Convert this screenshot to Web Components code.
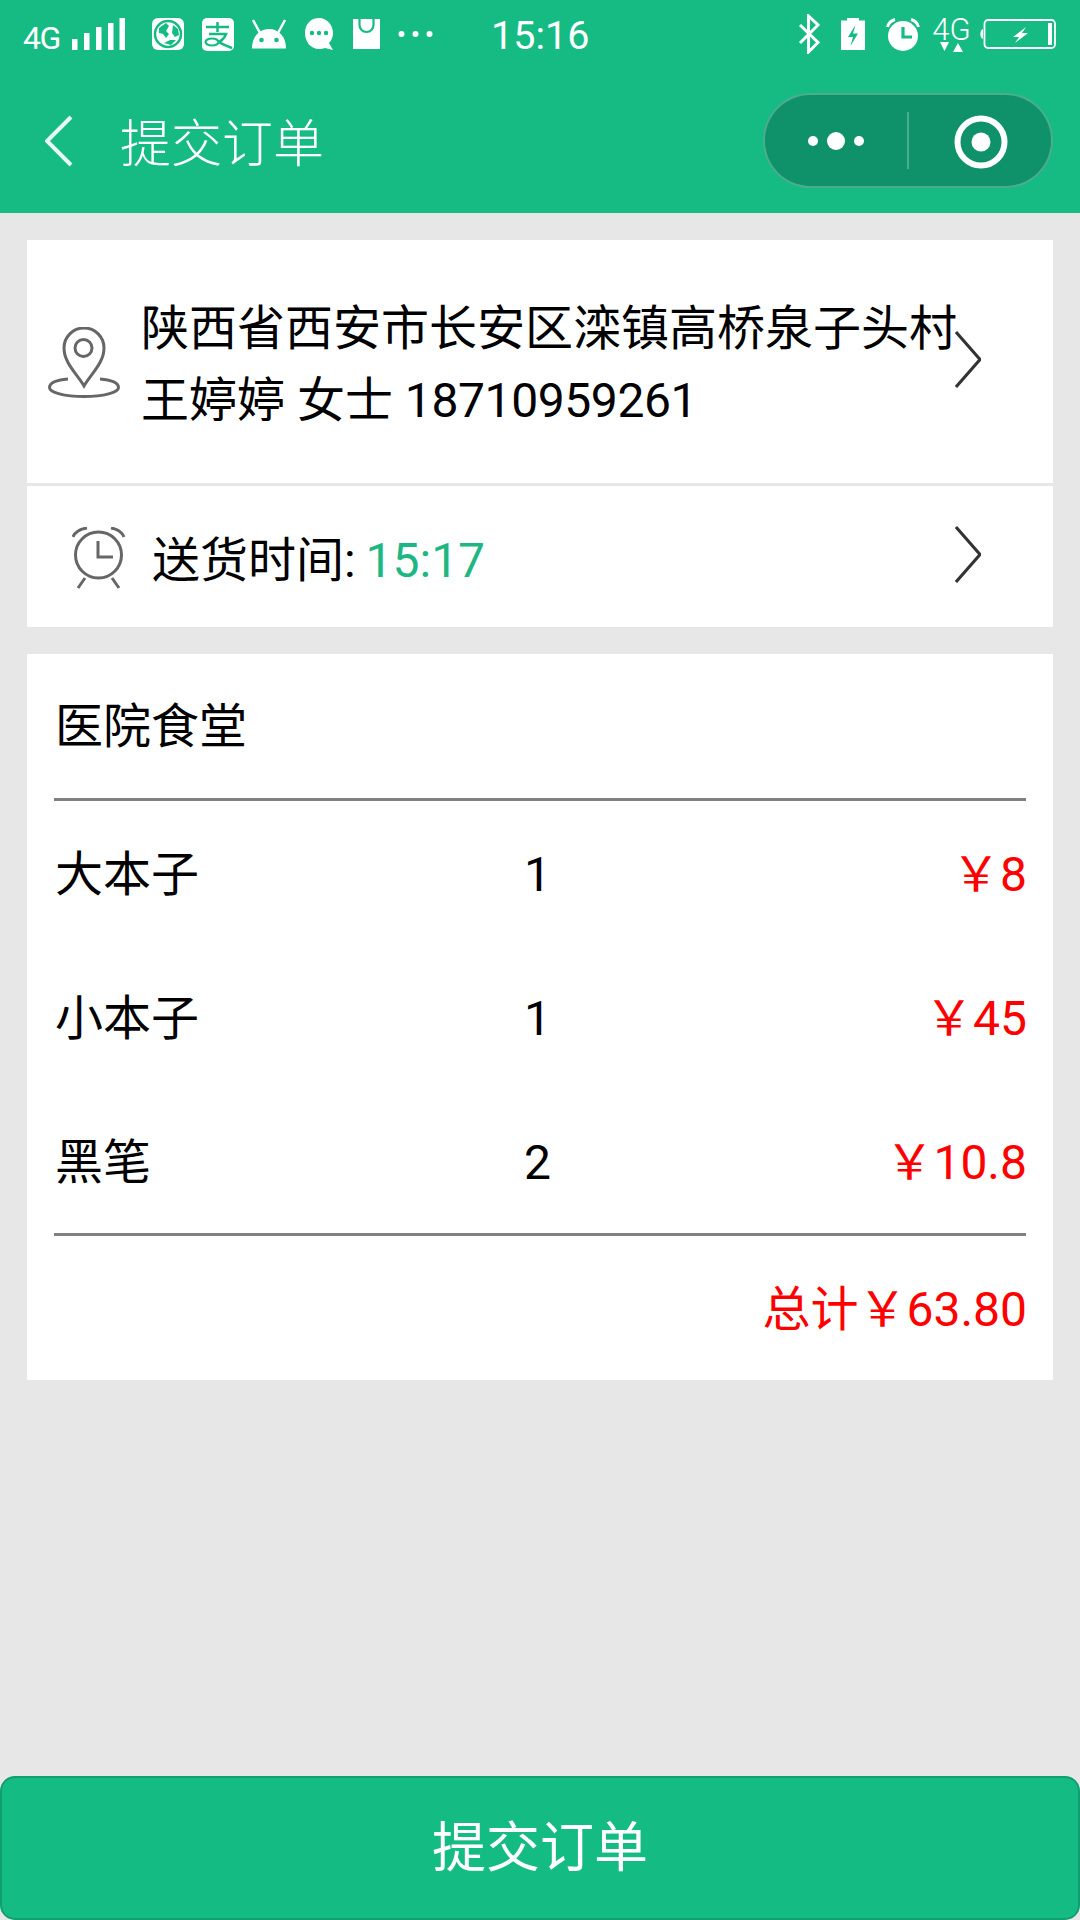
<!DOCTYPE html>
<html lang="zh">
<head>
<meta charset="utf-8">
<title>提交订单</title>
<style>
    html, body {
        margin: 0;
        height: 1920px;
    }
    body {
        display: flex;
        flex-direction: column;
        background: #e7e7e7;
        font-family: Roboto, "Noto Sans CJK SC", sans-serif;
        color: #000;
        overflow: hidden;
    }
    .orders {
        flex: 1;
        padding: 27px 27px 0;
    }
    .accent { color: #1db784; margin-left: -2px; }
    .phone { letter-spacing: -.4px; }
</style>
</head>
<body>
<app-statusbar></app-statusbar>
<app-navbar>提交订单</app-navbar>
<div class="orders">
    <info-row size="address">
        <svg slot="icon" width="72" height="71" viewBox="0 0 72 71" fill="none" stroke="#666" stroke-width="3">
            <path d="M36 59C29 47 16 36 16 21a20 20 0 0 1 40 0C56 36 43 47 36 59Z"/>
            <circle cx="35.500" cy="21" r="8.500"/>
            <path d="M20 52C8 53 1.500 56 1.500 60.500c0 5 15 9 34.500 9s34.500-4 34.500-9c0-4.500-7-7.500-18.500-8.500"/>
        </svg>
        <div>陕西省西安市长安区滦镇高桥泉子头村</div>
        <div>王婷婷 女士 <span class="phone">18710959261</span></div>
    </info-row>
    <info-row size="time">
        <svg slot="icon" width="54" height="63" viewBox="0 0 54 63" fill="none" stroke="#666" stroke-width="3">
            <circle cx="26.500" cy="28" r="23"/>
            <path d="M26 14v16h15"/>
            <path d="M1 10C3 5 8 2 15 1M52 10C50 5 45 2 39 1M13 51l-7 10M40 51l7 10"/>
        </svg>
        <div>送货时间: <span class="accent">15:17</span></div>
    </info-row>
    <order-card shop="医院食堂" total="总计￥63.80">
        <order-row name="大本子" qty="1" price="￥8"></order-row>
        <order-row name="小本子" qty="1" price="￥45"></order-row>
        <order-row name="黑笔" qty="2" price="￥10.8"></order-row>
    </order-card>
</div>
<submit-bar>提交订单</submit-bar>

<script>
class AppStatusbar extends HTMLElement {
    constructor() {
        super();
        this.attachShadow({ mode: 'open' });
        this.shadowRoot.innerHTML = `
            <style>
                :host {
                    display: flex;
                    align-items: center;
                    height: 68px;
                    padding: 0 24px 4px 24px;
                    background: #15bb83;
                    color: #fff;
                    font-family: Roboto, sans-serif;
                }
                svg { display: block; flex: none; }
                .net { font-size: 32px; letter-spacing: -1.500px; width: 36px; margin-top: 8px; margin-left: -1px; margin-right: 1px; }
                .time { font-size: 39.500px; width: 96px; margin-left: 58px; margin-top: 3px; }
                .spacer { flex: 1; }
                .net2 { display: flex; flex-direction: column; align-items: center; width: 37px; margin-left: 13px; }
                .net2 span { font-size: 31px; line-height: 25px; font-weight: 300; }
            </style>
            <span class="net">4G</span>
            <svg style="margin-left:12px" width="53" height="32" viewBox="0 0 53 32" fill="#fff">
                <rect x="0" y="21" width="5.500" height="11"/><rect x="12" y="15" width="5.500" height="17"/>
                <rect x="24" y="9" width="5.500" height="23"/><rect x="36" y="5" width="5.500" height="27"/>
                <rect x="47.500" y="0" width="5.500" height="32"/>
            </svg>
            <svg style="margin-left:27px" width="32" height="32" viewBox="0 0 32 32">
                <rect width="32" height="32" rx="6" fill="#fff"/>
                <circle cx="16" cy="16" r="13" fill="#fff" stroke="#15bb83" stroke-width="2.500"/>
                <path d="M7 10l7-5 3 3-3 5 3 3-3 4-3-4-4-1ZM21 7l5 4 1 6-4 2-3-4ZM12 25l6-3 6 0-5 5Z" fill="#15bb83"/>
            </svg>
            <svg style="margin-left:18px" width="32" height="33" viewBox="0 0 32 33">
                <rect width="32" height="33" rx="5" fill="#fff"/>
                <path d="M4 9h23M15.500 4v10M7 16h17c-2 6-8 9-13 10M12 21c4 3 10 6 18 9" fill="none" stroke="#15bb83" stroke-width="2.500"/>
                <ellipse cx="10" cy="24" rx="6.500" ry="3.500" fill="#fff" stroke="#15bb83" stroke-width="2.200"/>
            </svg>
            <svg style="margin-left:18px" width="34" height="30" viewBox="0 0 34 30">
                <path d="M0 29.500C0 18 7 10 17 10s17 8 17 19.500Z" fill="#fff"/>
                <path d="M8 14L1 1M26 14l7-13" stroke="#fff" stroke-width="2.500"/>
                <circle cx="9.500" cy="21" r="2.300" fill="#15bb83"/><circle cx="24.500" cy="21" r="2.300" fill="#15bb83"/>
            </svg>
            <svg style="margin-left:19px" width="30" height="33" viewBox="0 0 30 33">
                <path d="M14 0c8 0 14 7 14 15 0 4-1.500 7.500-4 10l4 7-8-2c-2 .8-4 1-6 1C6 31 0 24 0 15S6 0 14 0Z" fill="#fff"/>
                <circle cx="7" cy="15" r="2.200" fill="#15bb83"/><circle cx="14" cy="15" r="2.200" fill="#15bb83"/><circle cx="21" cy="15" r="2.200" fill="#15bb83"/>
            </svg>
            <svg style="margin-left:18px" width="27" height="30" viewBox="0 0 27 30">
                <rect width="27" height="30" fill="#fff"/>
                <path d="M6.500 0v6c0 4 3 7 7 7s7-3 7-7V0" fill="none" stroke="#15bb83" stroke-width="2.200"/>
            </svg>
            <svg style="margin-left:18px" width="35" height="8" viewBox="0 0 35 8" fill="#fff">
                <circle cx="3.500" cy="4" r="3"/><circle cx="17.500" cy="4" r="3"/><circle cx="31.500" cy="4" r="3"/>
            </svg>
            <span class="time">15:16</span>
            <span class="spacer"></span>
            <svg width="22" height="40" viewBox="0 0 22 40" fill="none" stroke="#fff" stroke-width="3">
                <path d="M2 11L20 28.500 10.500 38V2L20 11 2 29"/>
            </svg>
            <svg style="margin-left:21px" width="24" height="32" viewBox="0 0 24 32">
                <path d="M0 2.500h6V0h12v2.500h6V32H0Z" fill="#fff"/>
                <path d="M14.500 7L7 19h5l-2.500 9L17 15.500h-5Z" fill="#15bb83"/>
            </svg>
            <svg style="margin-left:21px" width="34" height="33" viewBox="0 0 34 33">
                <circle cx="17" cy="18" r="15" fill="#fff"/>
                <path d="M17 9v10h9" fill="none" stroke="#15bb83" stroke-width="3.200"/>
                <path d="M1.500 9C2.500 5 5 2.500 9 1.500M32.500 9C31.500 5 29 2.500 25 1.500" fill="none" stroke="#fff" stroke-width="3"/>
            </svg>
            <div class="net2">
                <span>4G</span>
                <svg width="24" height="10" viewBox="0 0 24 10" fill="#fff"><path d="M0 0h9L4.500 9ZM13 10h10L18 1Z"/></svg>
            </div>
            <svg style="margin-left:9px" width="77" height="30" viewBox="0 0 77 30">
                <path d="M4 10C0.500 11 0.500 19 4 20Z" fill="#fff"/>
                <rect x="5.500" y="1" width="70.500" height="28" rx="3.500" fill="none" stroke="#fff" stroke-width="1.800"/>
                <rect x="69" y="4" width="4" height="22" fill="#fff"/>
                <path d="M47 8L34 18h6l-4 6 13-10h-6Z" fill="#fff"/>
            </svg>
        `;
    }
}

class AppNavbar extends HTMLElement {
    constructor() {
        super();
        this.attachShadow({ mode: 'open' });
        this.shadowRoot.innerHTML = `
            <style>
                :host {
                    display: flex;
                    align-items: center;
                    height: 137px;
                    padding: 0 27px 4px 45px;
                    background: #15bb83;
                    color: #fff;
                    font-family: "Noto Sans CJK SC", sans-serif;
                    font-size: 51px;
                    font-weight: 300;
                }
                .title { margin-left: 47px; flex: 1; margin-top: -2px; }
                .capsule {
                    display: flex;
                    align-items: center;
                    width: 290px;
                    height: 95px;
                    box-sizing: border-box;
                    border: 2px solid rgba(255, 255, 255, .25);
                    border-radius: 48px;
                    background: #0f9269;
                }
                .menu { width: 142px; display: flex; justify-content: center; padding-right: 1px; box-sizing: border-box; }
                .line { width: 2px; height: 57px; background: rgba(255, 255, 255, .25); }
                .home { flex: 1; display: flex; justify-content: center; padding: 2px 0 0 2px; }
                svg { display: block; }
            </style>
            <svg width="28" height="52" viewBox="0 0 28 52" fill="none" stroke="#e8fbf4" stroke-width="4">
                <path d="M26 2L2 26l24 24"/>
            </svg>
            <span class="title"><slot></slot></span>
            <div class="capsule">
                <div class="menu">
                    <svg width="56" height="20" viewBox="0 0 56 20" fill="#fff">
                        <circle cx="5" cy="10" r="5"/><circle cx="28" cy="10" r="9"/><circle cx="51" cy="10" r="5"/>
                    </svg>
                </div>
                <div class="line"></div>
                <div class="home">
                    <svg width="54" height="54" viewBox="0 0 54 54">
                        <circle cx="27" cy="27" r="23.500" fill="none" stroke="#fff" stroke-width="6"/>
                        <circle cx="27" cy="27" r="9.500" fill="#fff"/>
                    </svg>
                </div>
            </div>
        `;
    }
}

class InfoRow extends HTMLElement {
    constructor() {
        super();
        this.attachShadow({ mode: 'open' });
        const isAddress = this.getAttribute('size') === 'address';
        this.shadowRoot.innerHTML = `
            <style>
                :host {
                    display: flex;
                    align-items: center;
                    height: ${isAddress ? 243 : 141}px;
                    margin-bottom: ${isAddress ? 3 : 27}px;
                    padding: 0 0 0 ${isAddress ? 21 : 45}px;
                    background: #fff;
                    font-size: 48px;
                    line-height: 72px;
                }
                .icon { display: flex; flex: none; width: ${isAddress ? 93 : 80}px; padding-top: ${isAddress ? 1 : 3}px; }
                .text {
                    flex: none;
                    width: ${isAddress ? 814 : 803}px;
                    padding-top: ${isAddress ? 7 : 8}px;
                    white-space: nowrap;
                }
                svg { display: block; margin-top: -4px; }
                ::slotted(svg) { display: block; }
            </style>
            <div class="icon"><slot name="icon"></slot></div>
            <div class="text"><slot></slot></div>
            <svg width="26" height="57" viewBox="0 0 26 57" fill="none" stroke="#333" stroke-width="3">
                <path d="M1 1l24 27.500L1 56"/>
            </svg>
        `;
    }
}

class OrderCard extends HTMLElement {
    constructor() {
        super();
        this.attachShadow({ mode: 'open' });
        this.shadowRoot.innerHTML = `
            <style>
                :host {
                    display: block;
                    padding: 0 27px;
                    background: #fff;
                    font-size: 48px;
                }
                .shop {
                    height: 144px;
                    line-height: 146px;
                    padding-left: 1px;
                    border-bottom: 3px solid #808080;
                }
                .rows { border-bottom: 3px solid #808080; }
                .total {
                    height: 144px;
                    line-height: 147px;
                    margin-right: -1px;
                    text-align: right;
                    color: #f00;
                }
            </style>
            <div class="shop">${this.getAttribute('shop')}</div>
            <div class="rows"><slot></slot></div>
            <div class="total">${this.getAttribute('total')}</div>
        `;
    }
}

class OrderRow extends HTMLElement {
    constructor() {
        super();
        this.attachShadow({ mode: 'open' });
        this.shadowRoot.innerHTML = `
            <style>
                :host {
                    display: grid;
                    grid-template-columns: 469px 1fr auto;
                    height: 144px;
                    line-height: 147px;
                    padding-left: 1px;
                    margin-right: -1px;
                }
                .price { color: #f00; }
            </style>
            <span>${this.getAttribute('name')}</span>
            <span>${this.getAttribute('qty')}</span>
            <span class="price">${this.getAttribute('price')}</span>
        `;
    }
}

class SubmitBar extends HTMLElement {
    constructor() {
        super();
        this.attachShadow({ mode: 'open' });
        this.shadowRoot.innerHTML = `
            <style>
                :host {
                    display: block;
                    flex: none;
                    height: 144px;
                    box-sizing: border-box;
                    border: 2px solid #0f9f70;
                    border-radius: 15px;
                    background: #14bc84;
                    color: #fff;
                    font-family: "Noto Sans CJK SC", sans-serif;
                    font-size: 54px;
                    line-height: 132px;
                    text-align: center;
                }
            </style>
            <slot></slot>
        `;
    }
}

customElements.define('app-statusbar', AppStatusbar);
customElements.define('app-navbar', AppNavbar);
customElements.define('info-row', InfoRow);
customElements.define('order-card', OrderCard);
customElements.define('order-row', OrderRow);
customElements.define('submit-bar', SubmitBar);
</script>
</body>
</html>
